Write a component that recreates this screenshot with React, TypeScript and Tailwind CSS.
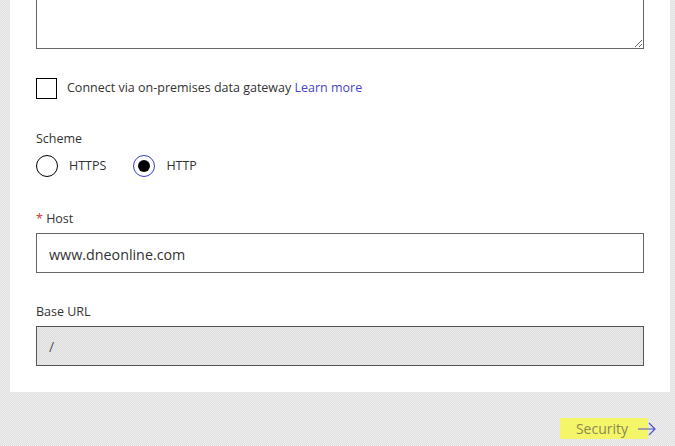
import { useState } from 'react'

const font = { fontFamily: '"Open Sans", "Noto Sans", sans-serif' }

function Radio({ label, checked, onClick }: { label: string; checked: boolean; onClick: () => void }) {
  return (
    <button type="button" onClick={onClick} className="flex items-center gap-[11px]">
      <span
        className={`w-[22px] h-[22px] rounded-full border flex items-center justify-center ${
          checked ? 'border-[#3a3ad0]' : 'border-[#000]'
        }`}
      >
        {checked && <span className="w-[12px] h-[12px] rounded-full bg-black" />}
      </span>
      <span className="text-[12.5px] text-[#333]">{label}</span>
    </button>
  )
}

export default function App() {
  const [scheme, setScheme] = useState<'https' | 'http'>('http')
  const [gateway, setGateway] = useState(false)

  return (
    <div
      style={font}
      className="h-[446px] w-[675px] overflow-hidden bg-[repeating-conic-gradient(#dedede_0_25%,#f0f0f0_0_50%)] bg-[length:2px_2px]"
    >
      <div className="ml-[10px] w-[660px] bg-white px-[26px] pb-[26px]">
        <textarea
          className="block w-full h-[89px] mt-[-40px] border border-[#666] bg-white outline-none resize-y"
          defaultValue=""
        />

        <label className="mt-[29px] flex items-center gap-[10px] cursor-pointer">
          <input
            type="checkbox"
            checked={gateway}
            onChange={e => setGateway(e.target.checked)}
            className="sr-only"
          />
          <span className="w-[21px] h-[21px] border border-black bg-white" />
          <span className="text-[12.5px] text-[#333]">
            Connect via on-premises data gateway <a className="text-[#4646c8]">Learn more</a>
          </span>
        </label>

        <div className="mt-[31px] text-[12.5px] text-[#333] leading-[18px]">Scheme</div>
        <div className="mt-[7px] flex items-center gap-[27px]">
          <Radio label="HTTPS" checked={scheme === 'https'} onClick={() => setScheme('https')} />
          <Radio label="HTTP" checked={scheme === 'http'} onClick={() => setScheme('http')} />
        </div>

        <div className="mt-[33px] text-[12.5px] text-[#333] leading-[18px]">
          <span className="text-[#d13438]">*</span> Host
        </div>
        <input
          className="mt-[5px] block w-full h-[40px] border border-[#666] px-[12px] pt-[2px] text-[14.3px] text-[#333] outline-none"
          defaultValue="www.dneonline.com"
        />

        <div className="mt-[30px] text-[12.5px] text-[#333] leading-[18px]">Base URL</div>
        <input
          disabled
          className="mt-[5px] block w-full h-[40px] border border-[#555] px-[12px] text-[14px] text-[#555] outline-none bg-[repeating-conic-gradient(#dcdcdc_0_25%,#ebebeb_0_50%)] bg-[length:2px_2px]"
          defaultValue="/"
        />
      </div>

      <div className="mt-[26px] mr-[18px] flex items-center justify-end">
        <button type="button" className="flex items-center">
          <span className="bg-[#f5f56a] pl-[16px] pr-[20px] h-[21px] flex items-center text-[14px] text-[#8a8a50]">Security</span>
          <svg width="20" height="14" viewBox="0 0 20 14" className="-ml-[11px]" fill="none" stroke="#5050d0" strokeWidth="1.2">
            <path d="M1 7h17M12 1l6 6-6 6" />
          </svg>
        </button>
      </div>
    </div>
  )
}
